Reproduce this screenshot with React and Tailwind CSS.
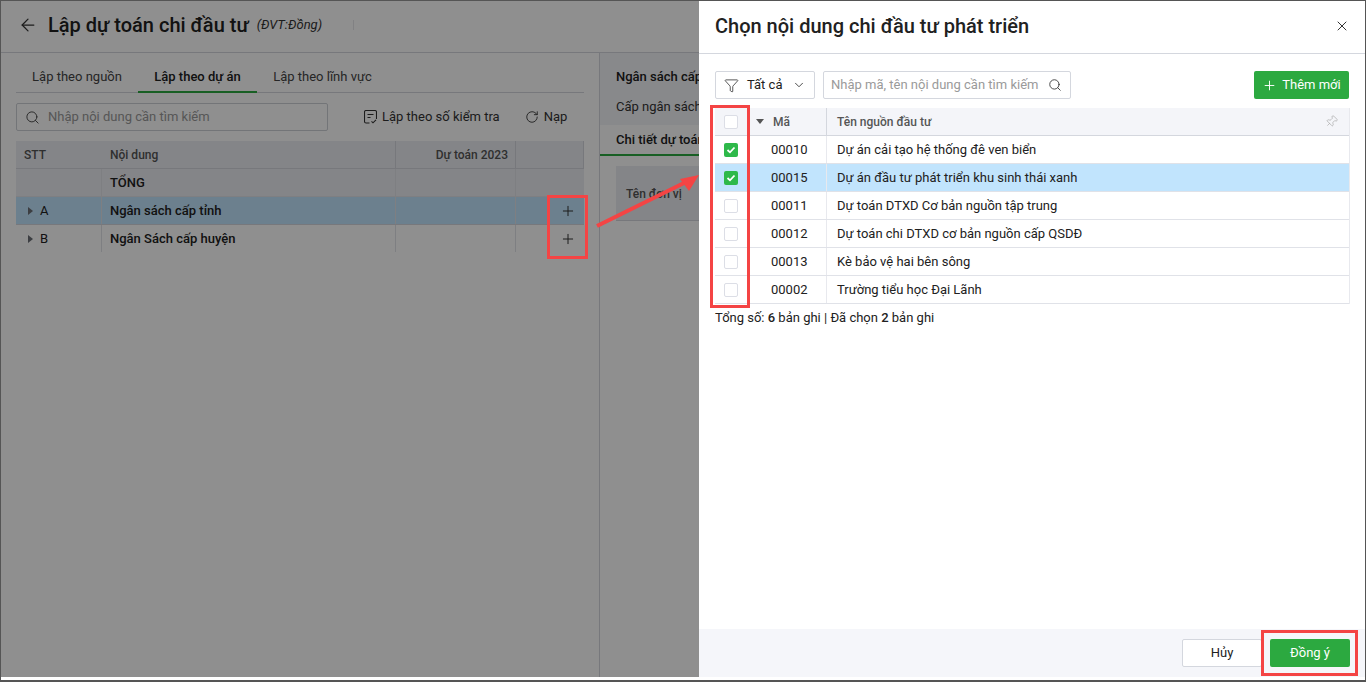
import { ArrowLeft, Search, Plus, X, ChevronDown, Funnel, Pin, RotateCw } from "lucide-react";

const leftRows = [
  { stt: "A", name: "Ngân sách cấp tỉnh", active: true },
  { stt: "B", name: "Ngân Sách cấp huyện", active: false },
];

const pickRows = [
  { code: "00010", name: "Dự án cải tạo hệ thống đê ven biển", checked: true },
  { code: "00015", name: "Dự án đầu tư phát triển khu sinh thái xanh", checked: true, active: true },
  { code: "00011", name: "Dự toán DTXD Cơ bản nguồn tập trung" },
  { code: "00012", name: "Dự toán chi DTXD cơ bản nguồn cấp QSDĐ" },
  { code: "00013", name: "Kè bảo vệ hai bên sông" },
  { code: "00002", name: "Trường tiểu học Đại Lãnh" },
];

function Caret() {
  return <span className="w-0 h-0 border-y-[4px] border-y-transparent border-l-[5px] border-l-[#6b6f76]" />;
}

function NoteIcon() {
  return (
    <svg width="13" height="14" viewBox="0 0 13 14" fill="none" stroke="#333" strokeWidth="1.100" className="shrink-0">
      <path d="M5.500 13H2a1.500 1.500 0 0 1-1.500-1.500V2A1.500 1.500 0 0 1 2 .5h9A1.500 1.500 0 0 1 12.500 2v7" />
      <path d="M3.500 4.500h6M3.500 7.500h3" />
      <path d="M7.500 11.300l1.500 1.500 3-3" />
    </svg>
  );
}

function Checkbox({ checked }) {
  if (checked) {
    return (
      <span className="w-[14px] h-[14px] rounded-[2px] bg-[#2eb94a] flex items-center justify-center">
        <svg width="10" height="8" viewBox="0 0 10 8" fill="none" stroke="#fff" strokeWidth="1.800">
          <path d="M1.500 4l2.500 2.300L8.500 1.500" />
        </svg>
      </span>
    );
  }
  return <span className="w-[14px] h-[14px] rounded-[2px] border border-[#dcdee6] bg-white" />;
}

function BackgroundPage() {
  return (
    <div className="w-full h-full bg-white flex flex-col text-[13px] text-[#212121]">
      <div className="h-[52px] border-b border-[#d4d7de] flex items-center shrink-0 bg-white pb-[3px]">
        <ArrowLeft size={20} strokeWidth={1.500} className="ml-[17px] text-[#333]" />
        <span className="ml-[10px] text-[20px] font-medium">Lập dự toán chi đầu tư</span>
        <span className="ml-[8px] text-[13px] italic text-[#333]">(ĐVT:Đồng)</span>
        <span className="ml-[31px] h-[10px] border-l border-[#e6e7ea]" />
      </div>
      <div className="flex-1 flex min-h-0">
        <div className="w-[599px] border-r border-[#d4d7de] px-[15px] shrink-0">
          <div className="h-[40px] border-b border-[#d4d7de] flex items-end w-[568px]">
            <span className="w-[122px] h-[40px] pb-[6px] flex items-end justify-center text-[#444]">Lập theo nguồn</span>
            <span className="w-[119px] h-[40px] pb-[5px] flex items-end justify-center font-medium border-b-2 border-[#2ca940] -mb-px">Lập theo dự án</span>
            <span className="w-[131px] h-[40px] pb-[6px] flex items-end justify-center text-[#444]">Lập theo lĩnh vực</span>
          </div>
          <div className="mt-[10px] h-[28px] flex items-center w-[568px]">
            <div className="w-[312px] h-[28px] border border-[#cdd0d6] rounded-[2px] flex items-center bg-white">
              <Search size={15} strokeWidth={1.500} className="ml-[8px] text-[#444]" />
              <span className="ml-[8px] text-[#9a9a9a]">Nhập nội dung cần tìm kiếm</span>
            </div>
            <span className="ml-[36px]">
              <NoteIcon />
            </span>
            <span className="ml-[5px] text-[#333]">Lập theo số kiểm tra</span>
            <RotateCw size={14} strokeWidth={1.500} className="ml-[25px] text-[#333]" />
            <span className="ml-[5px] text-[#333]">Nạp</span>
          </div>
          <div className="mt-[10px] w-[568px]">
            <div className="flex h-[28px] bg-[#eceef3] border-b border-[#d4d7de] text-[12px] font-medium text-[#555]">
              <span className="w-[86px] pl-[8px] flex items-center">STT</span>
              <span className="w-[293px] pl-[8px] flex items-center">Nội dung</span>
              <span className="w-[121px] pr-[7px] border-x border-[#d4d7de] flex items-center justify-end">Dự toán 2023</span>
              <span className="w-[68px] border-r border-[#d4d7de]" />
            </div>
            <div className="flex h-[28px] bg-[#eceef3] border-b border-[#e0e2e8] font-medium">
              <span className="w-[86px] border-r border-[#e0e2e8]" />
              <span className="w-[293px] pl-[8px] flex items-center">TỔNG</span>
              <span className="w-[121px] border-x border-[#e0e2e8]" />
              <span className="w-[68px]" />
            </div>
            {leftRows.map((r) => (
              <div key={r.stt} className={`flex h-[28px] border-b ${r.active ? "bg-[#c1e4fd] border-[#d4d7de]" : "border-transparent"}`}>
                <span className="w-[86px] pl-[12px] flex items-center gap-[7px] border-r border-[#e0e2e8]">
                  <Caret />
                  {r.stt}
                </span>
                <span className="w-[293px] pl-[8px] flex items-center font-medium">{r.name}</span>
                <span className="w-[121px] border-x border-[#e0e2e8]" />
                <span className="w-[68px] flex items-center justify-end pr-[8px]">
                  <Plus size={16} strokeWidth={1.500} className="text-[#333]" />
                </span>
              </div>
            ))}
          </div>
        </div>
        <div className="flex-1 min-w-0 overflow-hidden">
          <div className="h-[72px] bg-[#f3f4f8] pl-[16px] pt-[14px] whitespace-nowrap">
            <div className="font-medium">Ngân sách cấp tỉnh</div>
            <div className="mt-[10px] text-[#333]">Cấp ngân sách: Tỉnh</div>
          </div>
          <div className="h-[31px] border-b-2 border-[#2ca940] pl-[16px] flex items-center font-medium whitespace-nowrap">Chi tiết dự toán</div>
          <div className="ml-[16px] mt-[10px] h-[55px] bg-[#eceef3] border-b border-[#d4d7de] pl-[10px] pt-[1px] flex items-center text-[12px] font-medium text-[#555] whitespace-nowrap">Tên đơn vị</div>
        </div>
      </div>
    </div>
  );
}

function Drawer() {
  return (
    <div className="absolute top-0 right-0 bottom-0 w-[666px] bg-white flex flex-col text-[13px] text-[#212121]">
      <div className="h-[53px] border-b border-[#d4d7de] flex items-center justify-between pl-[16px] pr-[15px] pb-[2px] shrink-0">
        <span className="text-[20px] font-medium">Chọn nội dung chi đầu tư phát triển</span>
        <X size={16} strokeWidth={1.500} className="text-[#333]" />
      </div>
      <div className="flex-1 min-h-0 px-[16px] pt-[17px]">
        <div className="flex items-center h-[28px]">
          <div className="w-[100px] h-[28px] border border-[#d4d7de] rounded-[2px] flex items-center pl-[8px]">
            <Funnel size={15} strokeWidth={1.300} className="text-[#333]" />
            <span className="ml-[8px]">Tất cả</span>
            <ChevronDown size={14} strokeWidth={1.500} className="ml-[10px] text-[#333]" />
          </div>
          <div className="ml-[8px] w-[248px] h-[28px] border border-[#d4d7de] rounded-[2px] flex items-center justify-between pl-[7px] pr-[8px]">
            <span className="text-[#9a9a9a]">Nhập mã, tên nội dung cần tìm kiếm</span>
            <Search size={14} strokeWidth={1.500} className="text-[#333]" />
          </div>
          <button className="ml-auto w-[95px] h-[28px] rounded-[2px] bg-[#2ca940] text-white flex items-center justify-center gap-[5px]">
            <Plus size={15} strokeWidth={1.500} />
            Thêm mới
          </button>
        </div>
        <div className="mt-[9px] w-[635px] border-r border-[#e8e9ee]">
          <div className="flex h-[28px] bg-[#f4f5f9] border-b border-[#d4d7de] text-[12px] font-medium text-[#555]">
            <span className="w-[33px] flex items-center justify-center border-r border-[#e8e9ee] pr-[1px]">
              <Checkbox />
            </span>
            <span className="w-[79px] flex items-center pl-[8px] border-r border-[#d4d7de]">
              <span className="w-0 h-0 border-x-[4px] border-x-transparent border-t-[5px] border-t-[#555]" />
              <span className="ml-[9px]">Mã</span>
            </span>
            <span className="flex-1 pl-[10px] pr-[11px] flex items-center justify-between">
              Tên nguồn đầu tư
              <Pin size={13} strokeWidth={1.200} className="text-[#a8a8a8] rotate-45" />
            </span>
          </div>
          {pickRows.map((r) => (
            <div key={r.code} className={`flex h-[28px] border-b border-[#e0e2e8] ${r.active ? "bg-[#c1e4fd]" : ""}`}>
              <span className="w-[33px] flex items-center justify-center border-r border-[#e8e9ee] pr-[1px]">
                <Checkbox checked={r.checked} />
              </span>
              <span className="w-[79px] flex items-center pl-[23px] border-r border-[#e8e9ee]">{r.code}</span>
              <span className="flex-1 pl-[10px] flex items-center">{r.name}</span>
            </div>
          ))}
        </div>
        <div className="mt-[4px]">
          Tổng số: <b className="font-medium">6</b> bản ghi | Đã chọn <b className="font-medium">2</b> bản ghi
        </div>
      </div>
      <div className="h-[48px] bg-[#f5f6fa] shrink-0 flex items-center justify-end gap-[8px] pr-[15px]">
        <button className="w-[80px] h-[28px] bg-white border border-[#d4d7de] rounded-[2px]">Hủy</button>
        <button className="w-[80px] h-[28px] bg-[#2ca940] text-white rounded-[2px]">Đồng ý</button>
      </div>
    </div>
  );
}

export default function App() {
  return (
    <div className="relative w-[1366px] h-[682px] bg-white overflow-hidden font-['Roboto',sans-serif]">
      <div className="h-[682px] border-x border-t border-b-2 border-[#555] pb-[3px]">
        <div className="relative h-full">
          <BackgroundPage />
          <div className="absolute inset-0 bg-black/[.44]" />
          <Drawer />
        </div>
      </div>
      {/* annotations */}
      <div className="absolute left-[547px] top-[195px] w-[41px] h-[64px] border-[3px] border-[#f44444]" />
      <div className="absolute left-[710px] top-[105px] w-[40px] h-[203px] border-[3px] border-[#f44444]" />
      <div className="absolute left-[1261px] top-[630px] w-[97px] h-[46px] border-[3px] border-[#f44444]" />
      <svg className="absolute left-[590px] top-[170px]" width="110" height="60" viewBox="0 0 110 60">
        <path d="M7 56L94 13" stroke="#f44444" strokeWidth="4" />
        <path d="M109 5L90 9L99 21Z" fill="#f44444" />
      </svg>
    </div>
  );
}
